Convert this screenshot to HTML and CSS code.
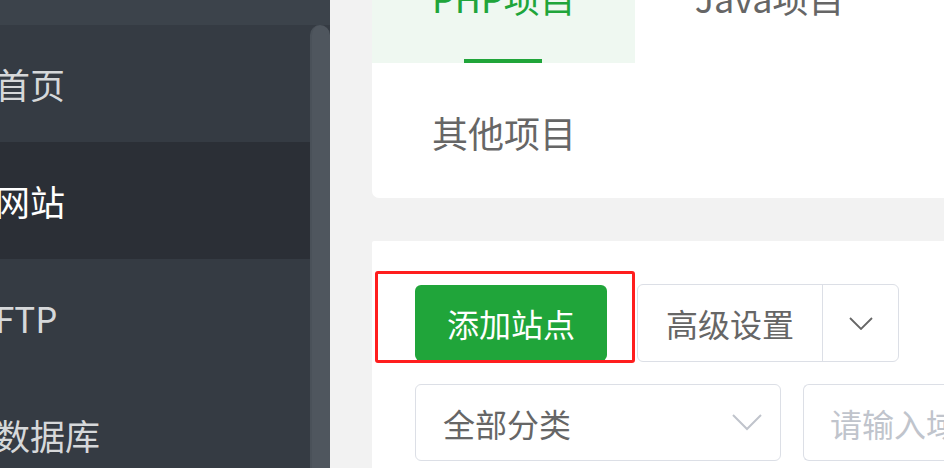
FILE: index.html
```html
<!DOCTYPE html>
<html lang="zh-CN">
<head>
    <meta charset="UTF-8">
    <meta name="viewport" content="width=device-width, initial-scale=1.0">
    <title>网站 - 面板</title>
    <link rel="stylesheet" href="styles.css">
</head>
<body>
    <!-- Sidebar -->
    <div class="sidebar">
        <div class="side-top"></div>
        <div class="side-body">
            <ul class="menu">
                <li class="menu-item">首页</li>
                <li class="menu-item active">网站</li>
                <li class="menu-item">FTP</li>
                <li class="menu-item">数据库</li>
            </ul>
            <div class="scroll-track">
                <div class="scroll-thumb"></div>
            </div>
        </div>
    </div>

    <!-- Main Content -->
    <div class="main">
        <div class="card tab-card">
            <div class="tab active">PHP项目</div>
            <div class="tab">Java项目</div>
            <div class="tab">其他项目</div>
        </div>

        <div class="card site-card">
            <div class="toolbar">
                <button class="btn btn-green">添加站点</button>
                <div class="btn-group">
                    <button class="btn btn-plain">高级设置</button>
                    <button class="btn btn-plain btn-caret">
                        <svg width="24" height="13" viewBox="0 0 24 13"><path d="M1 1 L12 12 L23 1" fill="none" stroke="#666" stroke-width="1.8"/></svg>
                    </button>
                </div>
                <div class="mark-box"></div>
            </div>

            <div class="filters">
                <div class="select">
                    <span>全部分类</span>
                    <svg width="30" height="17" viewBox="0 0 30 17"><path d="M1 1 L15 15 L29 1" fill="none" stroke="#c0c4cc" stroke-width="2"/></svg>
                </div>
                <div class="search">
                    <input type="text" placeholder="请输入域名或备注">
                </div>
            </div>
        </div>
    </div>
</body>
</html>
```

FILE: styles.css
```css
/* Global */
html, body {
    margin: 0;
    padding: 0;
    height: 100%;
    overflow: hidden;
}

body {
    display: flex;
    background-color: #f2f2f2;
    font-family: "Noto Sans CJK SC", "Microsoft YaHei", sans-serif;
}

/* Sidebar */
.sidebar {
    width: 330px;
    flex-shrink: 0;
    display: flex;
    flex-direction: column;
    background-color: #353b43;
}

.side-top {
    height: 25px;
    flex-shrink: 0;
    background-color: #3c434b;
}

.side-body {
    flex: 1;
    min-height: 0;
    overflow: hidden;
    display: flex;
}

.menu {
    flex: 1;
    list-style: none;
    margin: 0;
    padding: 0;
}

.menu-item {
    height: 117px;
    line-height: 117px;
    text-indent: -5px;
    font-size: 35px;
    color: #d6d8da;
}

.menu-item.active {
    background-color: #2b2f36;
    color: #fff;
}

.scroll-track {
    width: 20px;
    background-color: #353b43;
}

.scroll-thumb {
    height: 100%;
    background-color: #4f565e;
    border-radius: 10px 10px 0 0;
    border-left: 2px solid #4a5159;
}

/* Main */
.main {
    flex: 1;
    min-width: 0;
    padding-left: 42px;
    display: flex;
    flex-direction: column;
}

.card {
    background-color: #fff;
}

/* Tabs */
.tab-card {
    margin-top: -72px;
    display: flex;
    flex-wrap: wrap;
    border-radius: 0 0 0 7px;
}

.tab {
    position: relative;
    height: 135px;
    line-height: 138px;
    padding: 0 60px;
    font-size: 36px;
    color: #666;
}

.tab.active {
    padding: 0 59px 0 60px;
    background-color: #eff8f1;
    color: #20a53a;
}

.tab.active::after {
    content: "";
    position: absolute;
    left: 50%;
    bottom: 0;
    width: 78px;
    height: 4px;
    margin-left: -39px;
    background-color: #20a53a;
}

/* Site card */
.site-card {
    margin-top: 43px;
    flex: 1;
    padding: 43px 0 0 43px;
    border-radius: 2px 0 0 0;
}

.toolbar {
    position: relative;
    display: flex;
    align-items: center;
    gap: 30px;
}

.btn {
    font-family: inherit;
    font-size: 32px;
    border: none;
    cursor: pointer;
    padding: 0;
    margin: 0;
}

.btn-green {
    height: 76px;
    padding: 0 32px;
    border-radius: 6px;
    background-color: #20a53a;
    color: #fff;
}

.btn-group {
    display: flex;
    height: 76px;
    border: 1px solid #dcdfe6;
    border-radius: 6px;
}

.btn-plain {
    height: 100%;
    padding: 0 28px;
    background: none;
    color: #666;
}

.btn-caret {
    width: 76px;
    padding: 0;
    border-left: 1px solid #dcdfe6;
    display: flex;
    align-items: center;
    justify-content: center;
}

/* red highlight box laid over the add button */
.mark-box {
    position: absolute;
    left: -40px;
    top: -13px;
    width: 254px;
    height: 86px;
    border: 3px solid #ff1e1e;
    border-radius: 3px;
    pointer-events: none;
}

/* Filters */
.filters {
    display: flex;
    gap: 22px;
    margin-top: 22px;
}

.select {
    width: 366px;
    height: 77px;
    border: 1px solid #dcdfe6;
    border-radius: 6px;
    display: flex;
    align-items: center;
    justify-content: space-between;
    padding: 0 18px 0 27px;
    box-sizing: border-box;
    font-size: 32px;
    color: #666;
}

.search {
    flex: 1;
    height: 77px;
    border: 1px solid #dcdfe6;
    border-right: none;
    border-radius: 6px 0 0 6px;
    box-sizing: border-box;
}

.search input {
    width: 100%;
    height: 100%;
    border: none;
    outline: none;
    padding: 0 0 0 26px;
    box-sizing: border-box;
    background: none;
    font-family: inherit;
    font-size: 32px;
}

.search input::placeholder {
    color: #c0c4cc;
}
```
